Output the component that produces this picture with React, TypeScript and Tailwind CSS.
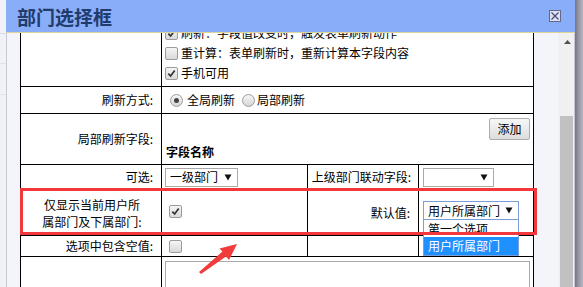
import React from 'react';

function Check({ checked }: { checked?: boolean }) {
  return (
    <span className="w-[13px] h-[13px] shrink-0 rounded-[2px] border border-[#9c9c9c] bg-linear-to-b from-[#f5f5f5] to-[#d9d9d9] flex items-center justify-center">
      {checked && (
        <svg viewBox="0 0 10 10" className="w-[9px] h-[9px]">
          <path d="M1.5 5.2 L4 7.8 L8.6 1.6" stroke="#333" strokeWidth="1.9" fill="none" />
        </svg>
      )}
    </span>
  );
}

function Radio({ checked }: { checked?: boolean }) {
  return (
    <span className="w-[13px] h-[13px] shrink-0 rounded-full border border-[#9c9c9c] bg-linear-to-b from-[#f7f7f7] to-[#d6d6d6] flex items-center justify-center">
      {checked && <span className="w-[5px] h-[5px] rounded-full bg-[#444]" />}
    </span>
  );
}

function Caret() {
  return (
    <svg viewBox="0 0 8 7" className="w-[8px] h-[7px] shrink-0">
      <path d="M0.5 0.5 H7.5 L4 6.5 Z" fill="#111" />
    </svg>
  );
}

function Select({ value, width, focused }: { value?: string; width: string; focused?: boolean }) {
  return (
    <div
      className={`${width} h-[19px] bg-white border flex items-center justify-between pl-[4px] pr-[5px] ${
        focused ? 'border-[#7b9ed6]' : 'border-[#a9a9a9]'
      }`}
    >
      <span className="leading-none">{value}</span>
      <Caret />
    </div>
  );
}

export default function App() {
  const cell = 'border-r border-b border-black';
  const label = `${cell} flex items-center justify-end pr-[8px]`;

  return (
    <div className="relative w-[583px] h-[287px] overflow-hidden flex bg-[#f1f2f7] text-[12px] text-black font-['Noto_Sans_CJK_SC','Liberation_Sans',sans-serif]">
      {/* page behind the dialog */}
      <div className="w-[6px] shrink-0 flex flex-col">
        <div className="h-[33px]" />
        <div className="h-px bg-[#d6dcea]" />
        <div className="h-[29px]" />
        <div className="h-px bg-[#dde2ee]" />
        <div className="h-[30px]" />
        <div className="h-px bg-[#dde2ee]" />
      </div>

      {/* dialog */}
      <div className="w-[569px] shrink-0 flex flex-col">
        <div className="h-[32px] shrink-0 bg-[#8aadfa] flex items-center justify-between pl-[11px] pr-[14px]">
          <span className="text-[19px] font-bold text-[#1f3c6c] leading-none">部门选择框</span>
          <span className="w-[12px] h-[12px] border border-[#66668a] bg-[#dde1f3] flex items-center justify-center">
            <svg viewBox="0 0 10 10" className="w-[10px] h-[10px]">
              <path d="M1.5 1.5 L8.5 8.5 M8.5 1.5 L1.5 8.5" stroke="#4a4a70" strokeWidth="1.2" />
            </svg>
          </span>
        </div>
        <div className="h-px shrink-0 bg-[#dcd49a]" />

        <div className="flex-1 flex overflow-hidden border-l border-[#c6c8d4] bg-[#f4f5fb]">
          <div className="w-[13px] shrink-0" />

          {/* form table, scrolled a little */}
          <div className="w-[514px] shrink-0 -mt-[14px] bg-white border-l border-t border-black grid grid-cols-[141px_146px_111px_115px] self-start">
            {/* row 1 */}
            <div className={`${cell} h-[67px]`} />
            <div className={`${cell} col-span-3 h-[67px] pt-[3px] pl-[3px]`}>
              {['刷新：字段值改变时，触发表单刷新动作', '重计算：表单刷新时，重新计算本字段内容', '手机可用'].map((t, i) => (
                <div key={t} className="h-[20px] flex items-center gap-[3px]">
                  <Check checked={i !== 1} />
                  <span>{t}</span>
                </div>
              ))}
            </div>

            {/* row 2 */}
            <div className={`${label} h-[27px]`}>刷新方式:</div>
            <div className={`${cell} col-span-3 h-[27px] flex items-center pl-[8px]`}>
              <Radio checked />
              <span className="ml-[4px]">全局刷新</span>
              <span className="ml-[7px]">
                <Radio />
              </span>
              <span className="ml-[2px]">局部刷新</span>
            </div>

            {/* row 3 */}
            <div className={`${label} h-[51px]`}>局部刷新字段:</div>
            <div className={`${cell} col-span-3 h-[51px] pt-[4px] pl-[4px] pr-[3px] flex flex-col`}>
              <div className="flex justify-end">
                <button className="w-[41px] h-[22px] rounded-[2px] border border-[#adadad] bg-linear-to-b from-[#f7f7f7] to-[#dddddd] text-[12px] leading-none">
                  添加
                </button>
              </div>
              <div className="mt-[4px] font-bold leading-[16px]">字段名称</div>
            </div>

            {/* row 4 */}
            <div className={`${label} h-[25px]`}>可选:</div>
            <div className={`${cell} h-[25px] flex items-center pl-[3px]`}>
              <Select value="一级部门" width="w-[73px]" />
            </div>
            <div className={`${cell} h-[25px] flex items-center justify-end pr-[7px]`}>上级部门联动字段:</div>
            <div className={`${cell} h-[25px] flex items-center pl-[4px]`}>
              <Select width="w-[71px]" />
            </div>

            {/* row 5 */}
            <div className={`${cell} h-[46px] flex items-center justify-center pl-[2px]`}>
              <span className="text-center leading-[17px]">
                仅显示当前用户所
                <br />
                属部门及下属部门:
              </span>
            </div>
            <div className={`${cell} h-[46px] flex items-center pl-[7px] pb-[3px]`}>
              <Check checked />
            </div>
            <div className={`${cell} h-[46px] flex items-center justify-end pr-[8px]`}>默认值:</div>
            <div className={`${cell} h-[46px] flex items-center pl-[4px] pb-[4px]`}>
              <div className="relative">
                <Select value="用户所属部门" width="w-[96px]" focused />
                <div className="absolute left-0 top-[18px] w-[96px] z-10 bg-white border border-[#7b9ed6]">
                  <div className="h-[17px] pl-[4px] flex items-center">第一个选项</div>
                  <div className="h-[18px] pl-[4px] flex items-center bg-[#1e90ff] text-white">用户所属部门</div>
                </div>
              </div>
            </div>

            {/* row 6 */}
            <div className={`${label} h-[21px]`}>选项中包含空值:</div>
            <div className={`${cell} h-[21px] flex items-center pl-[7px]`}>
              <Check />
            </div>
            <div className={`${cell} h-[21px]`} />
            <div className={`${cell} h-[21px]`} />

            {/* row 7 */}
            <div className={`${cell} h-[60px]`} />
            <div className={`${cell} col-span-3 h-[60px] pt-[4px] pl-[3px]`}>
              <div className="w-[365px] h-[50px] border border-[#a9a9a9] bg-white" />
            </div>
          </div>

          <div className="w-[24px] shrink-0" />

          {/* scrollbar */}
          <div className="w-[16px] shrink-0 bg-[#f0f0f0] flex flex-col">
            <div className="h-[18px] flex items-center justify-center pl-[2px]">
              <svg viewBox="0 0 7 4" className="w-[7px] h-[4px]">
                <path d="M0 4 L3.5 0 L7 4 Z" fill="#505050" />
              </svg>
            </div>
            <div className="h-[65px]" />
            <div className="flex-1 ml-[2px] mr-px bg-[#c1c1c1]" />
          </div>
          <div className="w-px shrink-0 bg-[#c6c8d4]" />
        </div>
      </div>

      {/* window edge */}
      <div className="w-[8px] shrink-0 bg-linear-to-r from-[#767682] via-[#9b9ca8] to-[#b4b5c2]" />

      {/* annotation: red frame and arrow */}
      <div className="absolute left-[20px] top-[188px] w-[517px] h-[47px] border-[3px] border-[#f2373d] pointer-events-none z-20" />
      <svg className="absolute left-0 top-0 w-[583px] h-[287px] pointer-events-none z-20" viewBox="0 0 583 287">
        <polygon
          points="237,244 229,260 226,256.5 201,274 199,272 222.5,251.5 219.5,248.5"
          fill="#f23b3b"
        />
      </svg>
    </div>
  );
}
